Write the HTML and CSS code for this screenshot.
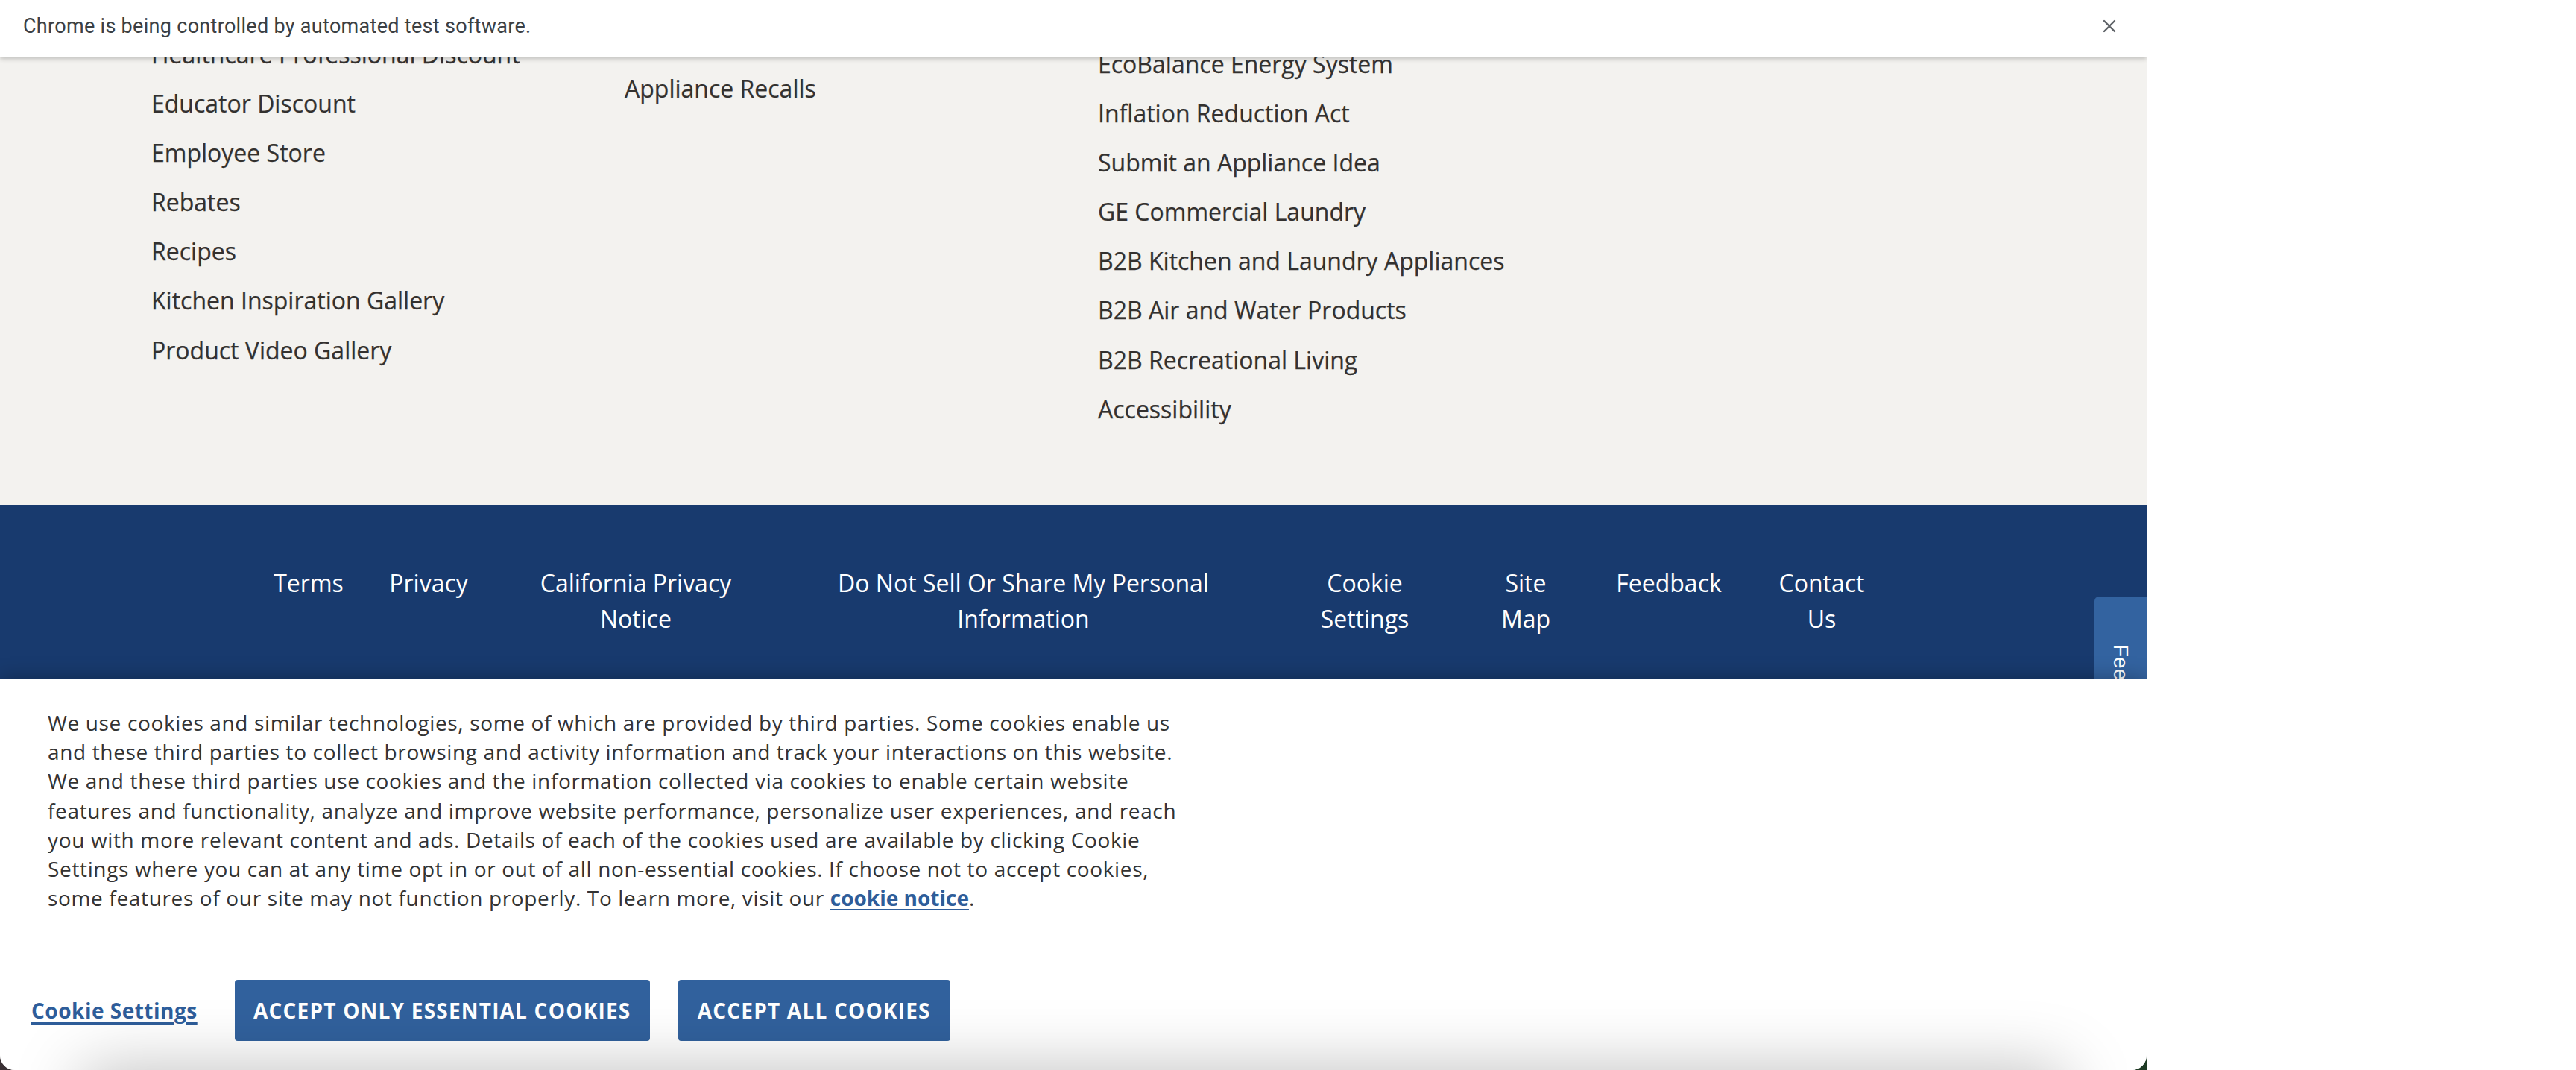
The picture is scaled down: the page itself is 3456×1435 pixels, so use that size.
FILE: index.html
```html
<!DOCTYPE html>
<html lang="en">
<head>
<meta charset="utf-8">
<title>GE Appliances footer</title>
<link rel="stylesheet" href="styles.css">
</head>
<body>
<div class="desktop">
  <div class="window">
    <div class="infobar">
      <span class="infobar-text">Chrome is being controlled by automated test software.</span>
      <span class="infobar-close" aria-label="Close">
        <svg viewBox="0 0 20 20" width="20" height="20"><path d="M3 3 L17 17 M17 3 L3 17" stroke="#5f6368" stroke-width="2.4" stroke-linecap="round" fill="none"/></svg>
      </span>
    </div>

    <main class="page">
      <section class="footer-nav">
        <ul class="col col-1">
          <li><a href="#">Healthcare Professional Discount</a></li>
          <li><a href="#">Educator Discount</a></li>
          <li><a href="#">Employee Store</a></li>
          <li><a href="#">Rebates</a></li>
          <li><a href="#">Recipes</a></li>
          <li><a href="#">Kitchen Inspiration Gallery</a></li>
          <li><a href="#">Product Video Gallery</a></li>
        </ul>
        <ul class="col col-2">
          <li><a href="#">Appliance Recalls</a></li>
        </ul>
        <ul class="col col-3">
          <li><a href="#">EcoBalance Energy System</a></li>
          <li><a href="#">Inflation Reduction Act</a></li>
          <li><a href="#">Submit an Appliance Idea</a></li>
          <li><a href="#">GE Commercial Laundry</a></li>
          <li><a href="#">B2B Kitchen and Laundry Appliances</a></li>
          <li><a href="#">B2B Air and Water Products</a></li>
          <li><a href="#">B2B Recreational Living</a></li>
          <li><a href="#">Accessibility</a></li>
        </ul>
        <div class="col col-4"></div>
      </section>

      <footer class="legal">
        <ul class="legal-links">
          <li class="w-terms"><a href="#">Terms</a></li>
          <li class="w-privacy"><a href="#">Privacy</a></li>
          <li class="w-california"><a href="#">California Privacy<br>Notice</a></li>
          <li class="w-donotsell"><a href="#">Do Not Sell Or Share My Personal<br>Information</a></li>
          <li class="w-cookie"><a href="#">Cookie<br>Settings</a></li>
          <li class="w-sitemap"><a href="#">Site<br>Map</a></li>
          <li class="w-feedback"><a href="#">Feedback</a></li>
          <li class="w-contact"><a href="#">Contact<br>Us</a></li>
        </ul>
      </footer>
    </main>

    <a class="feedback-tab" href="#">Feedback</a>

    <div class="cookie-banner">
      <p class="cookie-text">We use cookies and similar technologies, some of which are provided by third parties. Some cookies enable us<br>and these third parties to collect browsing and activity information and track your interactions on this website.<br>We and these third parties use cookies and the information collected via cookies to enable certain website<br>features and functionality, analyze and improve website performance, personalize user experiences, and reach<br>you with more relevant content and ads. Details of each of the cookies used are available by clicking Cookie<br>Settings where you can at any time opt in or out of all non-essential cookies. If choose not to accept cookies,<br>some features of our site may not function properly. To learn more, visit our <a class="cookie-link" href="#">cookie notice</a>.</p>
      <div class="cookie-actions">
        <a class="cookie-settings" href="#">Cookie Settings</a>
        <button class="btn btn-essential" type="button">Accept Only Essential Cookies</button>
        <button class="btn btn-all" type="button">Accept All Cookies</button>
      </div>
    </div>
  </div>
</div>
</body>
</html>
```

FILE: styles.css
```css
html, body {
  margin: 0;
  padding: 0;
  background: #ffffff;
  overflow: hidden;
}

.desktop {
  width: 2880px;
  height: 1435px;
  background: linear-gradient(to right, #3a3034, #1e3a24);
}

.window {
  position: relative;
  width: 2880px;
  height: 1435px;
  overflow: hidden;
  background: #ffffff;
  border-radius: 0 0 20px 20px;
  font-family: "Open Sans", "Noto Sans", sans-serif;
}

/* Chrome automation infobar */
.infobar {
  position: absolute;
  top: 0;
  left: 0;
  right: 0;
  height: 77px;
  box-sizing: border-box;
  padding: 0 40px 8px 31px;
  display: flex;
  align-items: center;
  justify-content: space-between;
  background: #ffffff;
  box-shadow: 0 2px 6px rgba(0, 0, 0, 0.22);
  z-index: 20;
}

.infobar-text {
  font-family: Roboto, "Liberation Sans", sans-serif;
  font-size: 27px;
  color: #3c4043;
  letter-spacing: 0.3px;
}

.infobar-close {
  display: flex;
  width: 20px;
  height: 20px;
}

/* grey link columns */
.footer-nav {
  display: grid;
  grid-template-columns: repeat(4, 635px);
  height: 677px;
  box-sizing: border-box;
  padding-left: 203px;
  background: #f3f2ef;
}

.col {
  list-style: none;
  margin: 0;
  padding: 0;
}

.col-1 { padding-top: 40px; }
.col-2 { padding-top: 86px; }
.col-3 { padding-top: 53px; }

.col a {
  display: block;
  font-size: 32px;
  line-height: 66.1px;
  color: #33312f;
  text-decoration: none;
  white-space: nowrap;
  -webkit-text-stroke: 0.25px #33312f;
}

/* blue legal bar */
.legal {
  background: #183a6e;
  padding: 81px 0 200px;
}

.legal-links {
  list-style: none;
  margin: 0;
  padding: 0;
  display: flex;
  justify-content: center;
  gap: 64px;
}

.legal-links li {
  display: flex;
  justify-content: center;
  flex: none;
  text-align: center;
}

.legal-links a {
  font-size: 32px;
  line-height: 48px;
  color: #ffffff;
  text-decoration: none;
  white-space: nowrap;
}

.w-terms { width: 88px; }
.w-privacy { width: 106px; }
.w-california { width: 322px; }
.w-donotsell { width: 590px; }
.w-cookie { width: 198px; }
.w-sitemap { width: 106px; }
.w-feedback { width: 150px; }
.w-contact { width: 132px; }

/* feedback side tab */
.feedback-tab {
  position: absolute;
  top: 800px;
  right: 0;
  width: 70px;
  height: 300px;
  box-sizing: border-box;
  padding-top: 64px;
  display: flex;
  justify-content: flex-start;
  align-items: center;
  background: #3363a0;
  border-radius: 6px 0 0 6px;
  color: #ffffff;
  font-family: "Liberation Sans", Arial, sans-serif;
  font-size: 28px;
  writing-mode: vertical-rl;
  text-decoration: none;
  z-index: 4;
}

/* cookie banner */
.cookie-banner {
  position: absolute;
  left: 0;
  right: 0;
  bottom: 0;
  height: 525px;
  box-sizing: border-box;
  padding-top: 40px;
  background: #ffffff;
  box-shadow: 0 0 26px rgba(0, 0, 0, 0.3);
  overflow: hidden;
  z-index: 10;
}

.cookie-banner::after {
  content: "";
  position: absolute;
  left: 110px;
  right: 110px;
  top: 100%;
  height: 120px;
  box-shadow: 0 0 90px rgba(0, 0, 0, 0.26);
}

.cookie-text {
  margin: 0;
  padding-left: 64px;
  font-size: 28px;
  line-height: 39.2px;
  letter-spacing: 0.65px;
  color: #333333;
  white-space: nowrap;
}

.cookie-link {
  color: #2e5d9a;
  font-weight: 700;
  letter-spacing: 0;
  text-decoration: underline;
  text-decoration-thickness: 2px;
  text-underline-offset: 4px;
}

.cookie-actions {
  display: flex;
  align-items: center;
  margin-top: 90px;
  padding-left: 42px;
  gap: 38px;
}

.cookie-settings {
  margin-right: 12px;
  font-size: 28px;
  font-weight: 700;
  color: #2e5d9a;
  text-decoration: underline;
  text-decoration-thickness: 3px;
  text-underline-offset: 5px;
  letter-spacing: 0.5px;
}

.btn {
  height: 82px;
  padding: 0;
  border: 0;
  border-radius: 4px;
  background: #31619d;
  color: #ffffff;
  font-family: "Open Sans", "Noto Sans", sans-serif;
  font-size: 28px;
  font-weight: 700;
  letter-spacing: 1.2px;
  text-transform: uppercase;
  text-align: center;
}

.btn-essential { width: 557px; }
.btn-all { width: 365px; }
```
